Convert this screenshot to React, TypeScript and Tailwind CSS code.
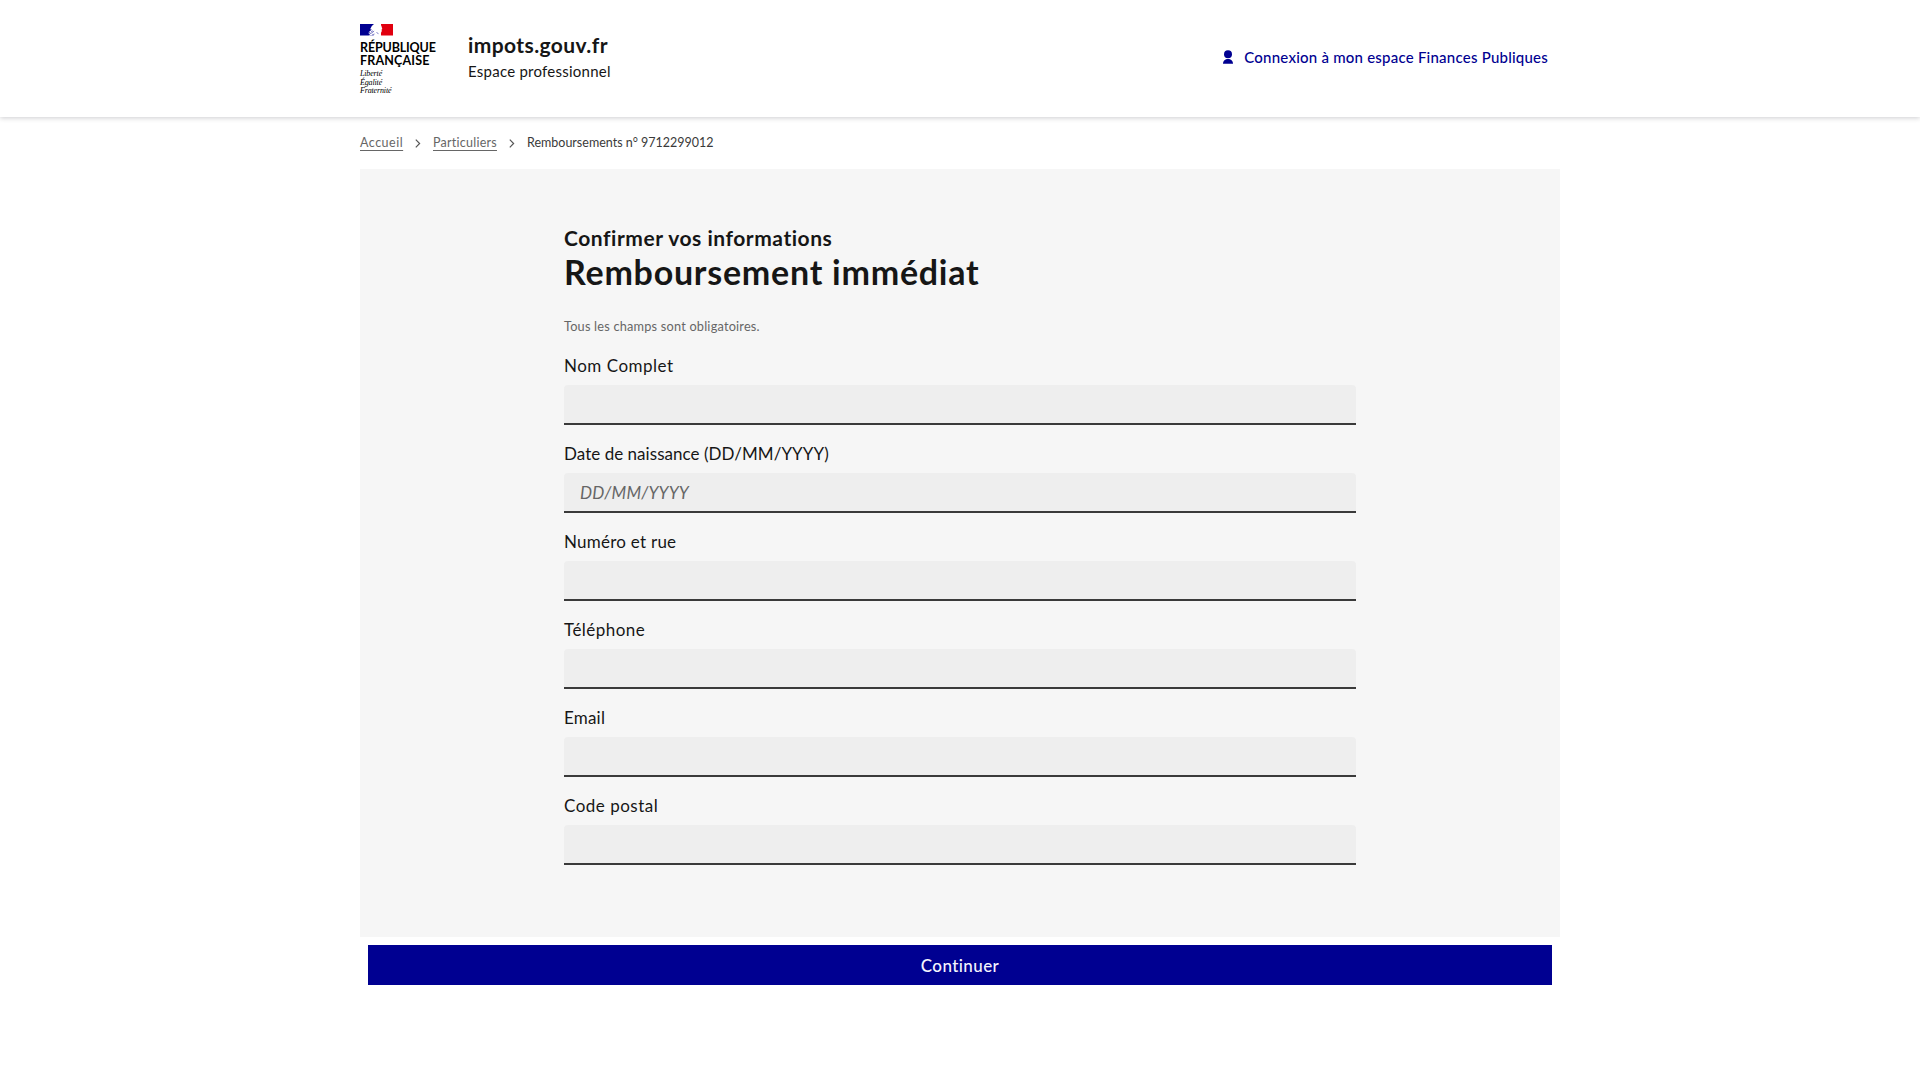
import React from 'react';

interface FieldProps {
  id: string;
  label: string;
  spacing: string;
  placeholder?: string;
}

const fields: FieldProps[] = [
  { id: 'name', label: 'Nom Complet', spacing: 'tracking-[0.5px]' },
  { id: 'birth', label: 'Date de naissance (DD/MM/YYYY)', spacing: 'tracking-[0.04px]', placeholder: 'DD/MM/YYYY' },
  { id: 'street', label: 'Numéro et rue', spacing: 'tracking-[0.25px]' },
  { id: 'phone', label: 'Téléphone', spacing: 'tracking-[0.45px]' },
  { id: 'email', label: 'Email', spacing: 'tracking-[0.2px]' },
  { id: 'zip', label: 'Code postal', spacing: 'tracking-[0.5px]' },
];

const Flag = () => (
  <svg width="33" height="12" viewBox="0 0 33 12" className="block">
    <rect width="14" height="11.5" fill="#000091" />
    <rect x="21" width="12" height="11.5" fill="#e1000f" />
    <path d="M14 0h5.5c1.3.6 2 1.8 2.2 3l.6 2-.7.6.2 1.5-.6 1.3-1.8.4-.2 1 2.3 1.7H8.5l1.8-1.5-2-.1 2.2-1.6-2.3.2 2.5-1.9 1-1.5-1.7.3L11.8 2z" fill="#fff" />
    <path d="M9.5 9.8l3-1.2 1.5-1.7M11 7.5l2-.6M12 11l2.5-1M16.5 8.5l2 1.2" stroke="#5a5ab8" strokeWidth=".8" fill="none" />
  </svg>
);

const Logo = () => (
  <div className="w-[76px]">
    <Flag />
    <p className="mt-[5px] text-[12.5px] leading-[13px] font-bold text-black">
      <span className="block tracking-[-0.15px]">RÉPUBLIQUE</span>
      <span className="block tracking-[0.15px]">FRANÇAISE</span>
    </p>
    <p className="mt-[3px] font-['Liberation_Serif',serif] text-[8px] leading-[8.5px] italic tracking-[-0.15px] text-black">
      Liberté<br />Égalité<br />Fraternité
    </p>
  </div>
);

const Chevron = () => (
  <svg width="6" height="9" viewBox="0 0 6 9" className="mt-px block" fill="none" stroke="#555" strokeWidth="1.2">
    <path d="M.8.7L4.6 4.5.8 8.3" />
  </svg>
);

const Header = () => (
  <header className="h-[117px] bg-white shadow-[0_1px_5px_rgba(0,0,18,0.2)]">
    <div className="mx-auto flex h-full w-[1200px] items-start">
      <div className="pt-6">
        <Logo />
      </div>
      <div className="ml-8 pt-[31px]">
        <p className="text-[21px] leading-7 font-bold tracking-[0.4px]">impots.gouv.fr</p>
        <p className="text-[15px] leading-6 tracking-[0.25px]">Espace professionnel</p>
      </div>
      <a href="#" className="mt-[45px] mr-3 ml-auto flex items-center text-[15px] leading-6 font-medium text-[#000091]">
        <svg width="10" height="14" viewBox="0 0 10 14" className="mr-[11px]" fill="currentColor">
          <circle cx="5" cy="4.3" r="4" />
          <path d="M0 13.7C0 11 2.2 9 5 9s5 2 5 4.7z" />
        </svg>
        <span className="tracking-[0.225px]">Connexion à mon espace Finances Publiques</span>
      </a>
    </div>
  </header>
);

const Breadcrumb = () => (
  <nav className="flex h-[52px] items-center pb-px text-[12.5px] leading-5 text-[#666]">
    <a href="#" className="w-[43px] tracking-[0.5px] whitespace-nowrap underline decoration-1 underline-offset-[3px]">Accueil</a>
    <span className="mr-3 ml-3"><Chevron /></span>
    <a href="#" className="w-[64px] tracking-[0.25px] whitespace-nowrap underline decoration-1 underline-offset-[3px]">Particuliers</a>
    <span className="mr-3 ml-3"><Chevron /></span>
    <span className="text-[#3a3a3a]">Remboursements n° 9712299012</span>
  </nav>
);

const Field = ({ id, label, spacing, placeholder }: FieldProps) => (
  <div>
    <label htmlFor={id} className={`block pt-0.5 leading-[22px] ${spacing}`}>{label}</label>
    <input
      id={id}
      type="text"
      placeholder={placeholder}
      className="mt-2 block h-10 w-full rounded-t border-b-2 border-[#3a3a3a] bg-[#eee] px-4 pt-px tracking-[0.15px] outline-none placeholder:text-[#666] placeholder:italic"
    />
  </div>
);

const App = () => {
  return (
    <div className="min-h-screen bg-white font-[Lato,'Noto_Sans',sans-serif] text-[17px] text-[#161616]">
      <Header />
      <main className="mx-auto w-[1200px]">
        <Breadcrumb />
        <section className="h-[768px] bg-[#f6f6f6] px-[204px] pt-[55px]">
          <h1 className="font-bold">
            <span className="block text-[21px] leading-7 tracking-[0.53px]">Confirmer vos informations</span>
            <span className="block text-[34px] leading-10 tracking-[0.75px]">Remboursement immédiat</span>
          </h1>
          <p className="mt-6 mb-px text-[12.75px] leading-5 tracking-[0.2px] text-[#666]">Tous les champs sont obligatoires.</p>
          <div className="mt-[17px] flex flex-col gap-4">
            {fields.map((field) => (
              <Field key={field.id} {...field} />
            ))}
          </div>
        </section>
        <div className="p-2">
          <button type="button" className="block h-10 w-full bg-[#000091] pt-px font-medium tracking-[0.4px] text-[#f5f5fe]">Continuer</button>
        </div>
      </main>
    </div>
  );
};

export default App;
